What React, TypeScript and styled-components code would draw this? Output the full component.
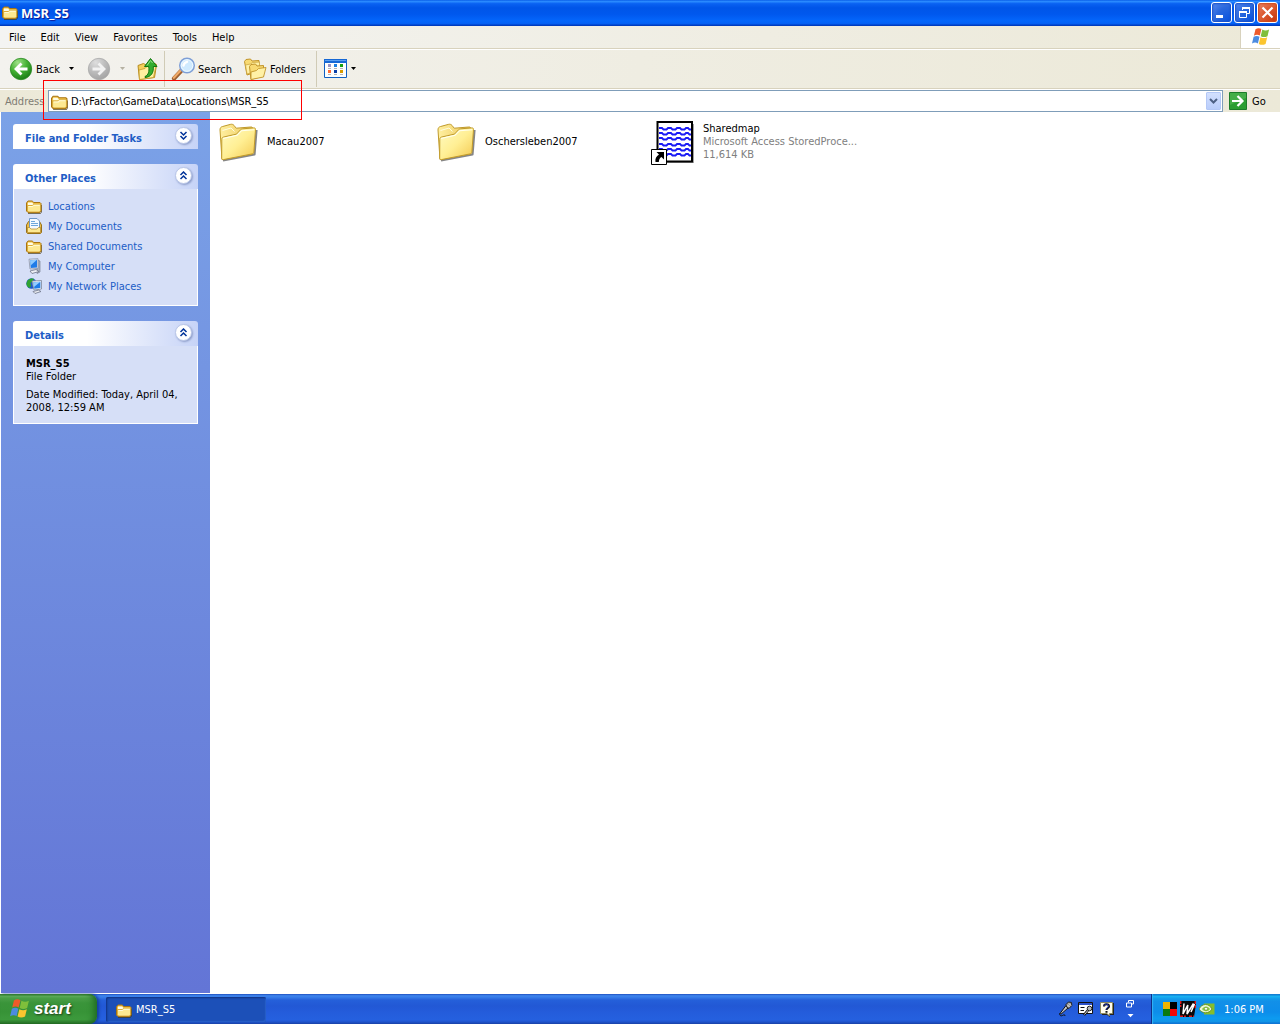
import React, { useState } from "react";
import styled, { createGlobalStyle, css } from "styled-components";

const GlobalStyle = createGlobalStyle`
  * { box-sizing: border-box; }
  body {
    margin: 0;
    background: #fff;
    color: #000;
    font: 11px/13px "DejaVu Sans Condensed", "DejaVu Sans", sans-serif;
  }
  button, input {
    font: inherit;
    color: inherit;
    border: 0;
    margin: 0;
    padding: 0;
    background: none;
  }
  svg { display: block; flex: none; }
  ul { list-style: none; margin: 0; padding: 0; }
  h1, h2, p { margin: 0; font-size: inherit; }
`;

/* ---------- icons ---------- */

const FolderIcon = ({ size = 16 }: { size?: number }) => (
  <svg width={size} height={size} viewBox="0 0 16 16" aria-hidden="true">
    <path d="M2 15.500h12.500l1-1.500V7" fill="none" stroke="#4a3c18" opacity=".7" />
    <path d="M.5 5 2 3h4.200l1.600 1.500H14l1 1V13l-1.200 1.500H2L.5 13z" fill="#f0c044" stroke="#a87412" />
    <path d="M2 4.500h4L7.500 6H14v1H2z" fill="#fffce4" />
    <path d="M1.500 7.500h4.800l1.200-1.200h7v6.200L13.500 14h-11l-1-1.200z" fill="#fde992" stroke="#cf9c25" strokeWidth=".7" />
    <path d="M2.500 8.500h4.300L8 7.300h5.700" fill="none" stroke="#fffbd8" />
  </svg>
);

const LargeFolderIcon = () => (
  <svg width="48" height="48" viewBox="0 -1 48 48" aria-hidden="true">
    <defs>
      <linearGradient id="lfFront" x1="0" y1="0" x2="1" y2="1">
        <stop offset="0" stopColor="#fffbc4" />
        <stop offset=".5" stopColor="#ffef94" />
        <stop offset="1" stopColor="#f3c84f" />
      </linearGradient>
      <linearGradient id="lfBack" x1="0" y1="0" x2="1" y2="0">
        <stop offset="0" stopColor="#fff0a0" />
        <stop offset="1" stopColor="#ecc65a" />
      </linearGradient>
    </defs>
    <path d="m9 41.500 31.500-6 2-24.500" fill="none" stroke="#222" strokeWidth="2.200" opacity=".55" strokeLinejoin="round" />
    <path d="M6 11c0-2 .8-3 2.300-3.400l8-2.200c1.700-.4 2.900 0 3.700 1l2.200 2.800 14.600-1.200c1.400-.1 2 .6 2 1.800L38 35 8 40.500z" fill="url(#lfBack)" stroke="#c09a2b" />
    <path d="M8.500 11.500 17 9l3.500 3.500" fill="none" stroke="#fffde0" />
    <path d="M36 9.800 39.500 9.500 39 32l-2.500 2z" fill="#fffdf0" stroke="#c9a544" strokeWidth=".6" />
    <path d="M7.800 20.500c0-1.500.6-2.200 1.900-2.500l12.800-2.900 4-4.300c.7-.6 1.300-.9 2.300-1l11-.9c1.200-.1 1.800.5 1.700 1.700L39.900 33c-.1 1.200-.6 1.700-1.700 1.900L9.500 40.600c-1.200.2-1.800-.3-1.800-1.500z" fill="url(#lfFront)" stroke="#c09a2b" />
    <path d="m9 19.500 14-3.200 4.500-4.600 12.500-1" fill="none" stroke="#fffff0" strokeWidth="1.100" />
  </svg>
);

const SharedMapIcon = () => (
  <svg width="48" height="48" viewBox="0 0 48 48" aria-hidden="true">
    <path d="M9 6h35v39H9z" fill="#666" opacity=".6" />
    <path d="M7.500 4h34.500v39.500H7.500z" fill="#fff" stroke="#000" strokeWidth="2" />
    {[10, 15, 20, 26, 31, 36].map((y) => (
      <path
        key={y}
        d={`M9 ${y}h3l1.500 1.500h3L18 ${y}h3l1.500 1.500h3L27 ${y}h3l1.500 1.500h3L36 ${y}h2l1.500 1.500H41`}
        fill="none"
        stroke="#1a1af5"
        strokeWidth="1.800"
      />
    ))}
    <path d="M1.500 31.500h15v15h-15z" fill="#fff" stroke="#000" />
    <path d="M6.500 34H14v7.500l-2.500-2.400c-1.800 1-2.500 2.600-2.700 5H5.500c-.6-3.400.7-6 3.500-7.700z" fill="#000" />
  </svg>
);

const DocumentsIcon = () => (
  <svg width="16" height="16" viewBox="0 0 16 16" aria-hidden="true">
    <path d="M.5 7 2.500 3.500h11l2 3.500v7.500l-1 1h-13l-1-1z" fill="#edbd45" stroke="#96701a" />
    <path d="M3.500.5h7.500l2.500 2.500v9h-10z" fill="#f4f9ff" stroke="#6f96c4" />
    <path d="M5 3.500h4M5 5.500h7M5 7.500h7" stroke="#6ea6dc" />
    <path d="M1.500 9.500h2L5 11h6l1.500-1.500h2v5h-13z" fill="#fde992" stroke="#b0842a" strokeWidth=".7" />
  </svg>
);

const ComputerIcon = () => (
  <svg width="16" height="16" viewBox="0 0 16 16" aria-hidden="true">
    <path d="m11 2 3 1v11l-3 1.500z" fill="#aab2c2" stroke="#6d7588" strokeWidth=".6" />
    <path d="M3 1.200 12 .7v9.800l-8 .5z" fill="#e3e8f2" stroke="#8a93a8" strokeWidth=".8" />
    <path d="m4 2.200 7-.5v7.800l-6.200.4z" fill="#1f7be8" />
    <path d="m4 2.200 7-.5L4.600 7.500z" fill="#8cc9ff" />
    <path d="m4 13 6-1.500 3 2L6 15.500z" fill="#eef0f5" stroke="#6d7588" strokeWidth=".8" />
  </svg>
);

const NetworkIcon = () => (
  <svg width="16" height="16" viewBox="0 0 16 16" aria-hidden="true">
    <circle cx="5.500" cy="5.500" r="5.200" fill="#1f57c8" />
    <path d="M1.500 2.500C3.500.3 6 0 8 .8L6.500 3.500 4.500 5 5 8l-1.500 2C1.500 9 .5 7.500.4 5.500z" fill="#2fa332" />
    <path d="M6 3 15.500 2.500V11L8 12z" fill="#eef1f7" stroke="#7c869c" strokeWidth=".8" />
    <path d="m7.200 4.200 7.200-.5V10l-6 .8z" fill="#1f7be8" />
    <path d="m7.200 4.200 7.200-.5L8 9z" fill="#93ccff" />
    <path d="m7 13.500 5.500-1.300 2.500 1.300-6 2z" fill="#eef0f5" stroke="#6d7588" strokeWidth=".8" />
  </svg>
);

const NavIcon = ({ forward }: { forward?: boolean }) => (
  <svg width="24" height="24" viewBox="0 0 24 24" aria-hidden="true">
    <defs>
      <radialGradient id={forward ? "navF" : "navB"} cx=".35" cy=".2" r=".85">
        <stop offset="0" stopColor={forward ? "#dedede" : "#9fe088"} />
        <stop offset=".5" stopColor={forward ? "#bdbdbd" : "#45b234"} />
        <stop offset="1" stopColor={forward ? "#a2a2a2" : "#187a14"} />
      </radialGradient>
    </defs>
    <circle cx="12" cy="12" r="10.700" fill={forward ? "url(#navF)" : "url(#navB)"} stroke={forward ? "#a9a9a9" : "#2a8a22"} strokeWidth=".8" />
    <path
      d={forward ? "M5.500 12H16M11.500 6.500 17 12l-5.500 5.500" : "M18.500 12H8M12.500 6.500 7 12l5.500 5.500"}
      fill="none"
      stroke={forward ? "#f2f2f2" : "#fff"}
      strokeWidth="2.800"
    />
  </svg>
);

const UpIcon = () => (
  <svg width="24" height="24" viewBox="0 0 24 24" aria-hidden="true">
    <path d="m3 8.500 5.500-2L11 8l9-1.500 1.500 1-2 13L4.500 22.500z" fill="#f3cf5c" stroke="#b78c20" />
    <path d="m4 13 6-1.500L12 9.500l9-.5-2.500 11.500-14 2z" fill="#fff0a0" stroke="#c79a2a" strokeWidth=".8" />
    <path d="M10 19.500c3.500-1.500 4.500-5 3.700-10H9.500L15.500 1.500 22 9.500h-3.700c.5 6.500-2.300 10.500-8.300 11z" fill="#35ad30" stroke="#12780f" />
    <path d="M12 8.500 15.500 3.500l2 2.500" fill="none" stroke="#9be58c" />
  </svg>
);

const SearchIcon = () => (
  <svg width="24" height="24" viewBox="0 0 24 24" aria-hidden="true">
    <path d="m3 21.500 7-7.500" stroke="#9c5f30" strokeWidth="4.200" strokeLinecap="round" />
    <path d="m2.800 20.800 7-7.500" stroke="#f0aa68" strokeWidth="2.200" strokeLinecap="round" />
    <circle cx="16" cy="8.500" r="7.300" fill="#b9e0fc" stroke="#7f9fd6" strokeWidth="1.400" />
    <circle cx="16" cy="8.500" r="5.800" fill="#cfeafe" stroke="#f4fbff" />
    <path d="M12.500 8.500c.3-2 1.500-3.200 3.500-3.700" fill="none" stroke="#fff" strokeWidth="2.400" strokeLinecap="round" />
  </svg>
);

const FoldersIcon = () => (
  <svg width="24" height="24" viewBox="0 0 24 24" aria-hidden="true">
    <path d="M1.500 4.500 3 2.500l4.500-.5L9 4l7-.5V14L4 18z" fill="#f8da72" stroke="#c1942a" />
    <path d="m2.500 8 5-1 2-1.500 7-.5v8L4 17z" fill="#fff1a6" stroke="#c9a03a" strokeWidth=".7" />
    <path d="M6.500 9.500 8 7.500l4.500-.5L14 9l6.500-.5V19L8 22.500z" fill="#f8da72" stroke="#c1942a" />
    <path d="m8 15 5.500-1.500 2-2 7.500-1-2.500 9.500L8 22.500z" fill="#fff1a6" stroke="#c1942a" strokeWidth=".9" />
  </svg>
);

const ViewsIcon = () => (
  <svg width="24" height="20" viewBox="-1 0 24 20" aria-hidden="true">
    <path d="M.5.500h22v18H.5z" fill="#fdfefe" stroke="#0f5fc2" />
    <path d="M0 0h23v4H0z" fill="#1668d4" />
    <path d="M1 1h21v1H1z" fill="#5ba0f0" />
    <path d="M4 5h3v3H4z" fill="#9a93c4" />
    <path d="M10 5h3v3h-3z" fill="#1b7fe0" />
    <path d="M16 5h3v3h-3z" fill="#15a012" />
    <path d="M4 11h3v3H4z" fill="#ff6a33" />
    <path d="M10 11h3v3h-3z" fill="#0b3fa8" />
    <path d="M16 11h3v3h-3z" fill="#d79a00" />
    <path d="M4 9.500h3m3 0h3m3 0h3M4 15.500h3m3 0h3m3 0h3" stroke="#b4b4b4" />
  </svg>
);

const Caret = ({ muted }: { muted?: boolean }) => (
  <svg width="7" height="4" viewBox="0 0 7 4" aria-hidden="true">
    <path d={muted ? "M1 0h5L3.500 3z" : "M1 0h5L3.500 3z"} fill={muted ? "#b5b1a2" : "#000"} />
  </svg>
);

const GoIcon = () => (
  <svg width="18" height="18" viewBox="0 0 18 18" aria-hidden="true">
    <path d="M.5.500h17v17H.5z" fill="#2b9e31" stroke="#1d7c28" />
    <path d="M1 1h16v5L1 13z" fill="#57b956" opacity=".6" />
    <path d="M3 9h10M8.500 4l5 5-5 5" fill="none" stroke="#fff" strokeWidth="2.200" />
  </svg>
);

const FlagIcon = ({ size = 20 }: { size?: number }) => (
  <svg width={size} height={size} viewBox="0 0 20 20" aria-hidden="true">
    <path d="M4.500 2.200C6.500.9 8.500.9 10.400 2L8.800 8.600C7 7.500 5 7.500 2.900 8.700z" fill="#ee5a2a" />
    <path d="M11.300 2.500c2.200 1.200 4.300 1.200 6.800 0l-1.600 6.700c-2.400 1.200-4.500 1.200-6.800 0z" fill="#7fbf3b" />
    <path d="M2.600 9.800c2.100-1.200 4-1.200 5.900-.1L6.900 16.400C5 15.300 3.100 15.300 1 16.500z" fill="#4b8be0" />
    <path d="M9.400 10.200c2.300 1.200 4.400 1.200 6.800 0l-1.600 6.700c-2.400 1.200-4.500 1.200-6.800 0z" fill="#fbc52f" />
  </svg>
);

const ChevronsIcon = ({ open }: { open: boolean }) => (
  <svg width="9" height="9" viewBox="0 0 9 9" aria-hidden="true">
    <path
      d={open ? "m1.500 4 3-3 3 3m-6 4 3-3 3 3" : "m1.500 1 3 3 3-3m-6 4 3 3 3-3"}
      fill="none"
      stroke="#003399"
      strokeWidth="1.500"
    />
  </svg>
);

const MinimizeGlyph = () => (
  <svg width="19" height="19" viewBox="0 0 19 19" aria-hidden="true">
    <path d="M4 12h7v3H4z" fill="#fff" />
  </svg>
);

const RestoreGlyph = () => (
  <svg width="19" height="19" viewBox="0 0 19 19" aria-hidden="true">
    <path d="M7.500 7V4.500h7v6H12" fill="none" stroke="#fff" />
    <path d="M7 4h8v2H7z" fill="#fff" />
    <path d="M4.500 8.500h7v6h-7z" fill="none" stroke="#fff" />
    <path d="M4 8h8v2H4z" fill="#fff" />
  </svg>
);

const CloseGlyph = () => (
  <svg width="19" height="19" viewBox="0 0 19 19" aria-hidden="true">
    <path d="m4.500 4.500 10 10m0-10-10 10" stroke="#fff" strokeWidth="2.200" />
  </svg>
);

const MicIcon = () => (
  <svg width="16" height="16" viewBox="0 0 16 16" aria-hidden="true">
    <path d="M3 12c-1.500 2 1 3.500 2.500 2.500S8 13.500 8 15" fill="none" stroke="#111" />
    <path d="m3 12.500 6-8 2.500 2-7.500 6.700z" fill="#c4c8d0" stroke="#111" />
    <path d="M9 3.500 11.500 1l3 .5.3 3L12 7.500 9.500 6z" fill="#9a9a9a" stroke="#222" />
    <path d="m10.500 4 2 2M12 2.500 14 4.500" stroke="#fff" strokeWidth=".8" />
  </svg>
);

const ToolsIcon = () => (
  <svg width="16" height="16" viewBox="0 0 16 16" aria-hidden="true">
    <path d="M.5 1.500h14v11H.5z" fill="#fff" stroke="#111" />
    <path d="M1 2h13v2H1z" fill="#2b50c8" />
    <path d="M2.500 6.500h4m-4 3h3.500" stroke="#111" />
    <path d="m6 14 5-6" stroke="#111" strokeWidth="2.600" />
    <path d="m6.500 13.500 5-6" stroke="#ddd" />
    <circle cx="11.500" cy="7.500" r="2.300" fill="#bbb" stroke="#222" />
  </svg>
);

const HelpIcon = () => (
  <svg width="16" height="16" viewBox="0 0 16 16" aria-hidden="true">
    <path d="M3 2h12v12h-4v2L8 14H3z" fill="#222" />
    <path d="M1.500 1.500h12v11h-3V15L8 12.500H1.500z" fill="#fffdee" stroke="#8d8a5c" />
    <path d="M5 5.500c0-3 5-3 5 0 0 1.500-2.500 1.500-2.500 3.500M7.500 10v1.800" fill="none" stroke="#111" strokeWidth="2" />
    <path d="M5 5c.5-2.500 4-2.500 4.500 0 0 1.500-2.300 1.500-2.300 3.500" fill="none" stroke="#1e3ad0" strokeWidth=".9" />
  </svg>
);

const LanguageRestoreIcon = () => (
  <svg width="10" height="8" viewBox="0 0 10 8" aria-hidden="true">
    <path d="M3.500 2.500v-2h5v3.500H7M1.500 3h5v4h-5z" fill="none" stroke="#fff" />
  </svg>
);

const TrayCaret = () => (
  <svg width="7" height="4" viewBox="0 0 7 4" aria-hidden="true">
    <path d="M.5 0h6l-3 3.200z" fill="#fff" />
  </svg>
);

const QuadIcon = () => (
  <svg width="14" height="14" viewBox="0 0 14 14" aria-hidden="true">
    <path d="M0 0h7v7H0z" fill="#f0b400" />
    <path d="M7 0h7v7H7z" fill="#000" />
    <path d="M0 7h7v7H0z" fill="#0a7a10" />
    <path d="M7 7h7v7H7z" fill="#f40808" />
  </svg>
);

const StripedIcon = () => (
  <svg width="16" height="16" viewBox="0 0 16 16" aria-hidden="true">
    <path d="M0 0h16v3l-2 13H0z" fill="#0a0a0a" />
    <path d="M.7 0v6M15.300 0v8M0 15.300h6M9 15.300h5" stroke="#e01818" strokeWidth="1.400" strokeDasharray="3 1" />
    <path d="M4 2.500 3 13 7.800 4 7 13l6.500-10.500M14.500 3 11 11" fill="none" stroke="#fff" strokeWidth="1.500" />
  </svg>
);

const GraphicsIcon = () => (
  <svg width="16" height="14" viewBox="0 0 16 14" aria-hidden="true">
    <path d="M5 1.500h10.500v11H5z" fill="#86bd2b" />
    <path d="M0 7c3-6 10-6 13 0-3 5-10 5-13 0z" fill="#eaf4d2" stroke="#5b8a12" strokeWidth=".8" />
    <path d="M3 7c2-3.500 6-3.500 8 0-2 3-6 3-8 0z" fill="#8cc63f" />
    <path d="M5 7c1-2 3-2 4 0-1 1.500-3 1.500-4 0z" fill="#fff" stroke="#5b8a12" strokeWidth=".6" />
  </svg>
);

/* ---------- window frame ---------- */

const Desktop = styled.div`
  display: flex;
  flex-direction: column;
  min-height: 100vh;
`;

const Window = styled.div`
  position: relative;
  display: flex;
  flex: 1;
  flex-direction: column;
`;

const TitleBar = styled.header`
  display: flex;
  align-items: center;
  height: 26px;
  padding: 0 2px 2px;
  background: linear-gradient(
    #0a5fe8 0, #2a8bff 6%, #0a62f2 14%, #0055e8 30%, #0058ee 55%, #0466fb 80%, #0562f5 90%, #0040c8 97%, #0036b0 100%
  );
`;

const WindowTitle = styled.h1`
  flex: 1;
  padding: 2px 0 0 3px;
  color: #fff;
  font: 700 13px/20px "Noto Sans", sans-serif;
  text-shadow: 1px 1px 1px #0f1089;
`;

const CaptionButtons = styled.div`
  display: flex;
  gap: 2px;
`;

const CaptionButton = styled.button<{ $close?: boolean }>`
  width: 21px;
  height: 21px;
  border: 1px solid #fff;
  border-radius: 3px;
  background: ${(p) =>
    p.$close
      ? "radial-gradient(circle at 90% 90%, #c83a10 0, #dc5a30 55%, #e98a6f 100%)"
      : "radial-gradient(circle at 90% 90%, #0a54e0 0, #2a68dd 55%, #5c8cf0 100%)"};
  box-shadow: inset 0 0 2px 1px ${(p) => (p.$close ? "#cf4a1c" : "#1a50c8")};
`;

const MenuBar = styled.nav`
  display: flex;
  justify-content: space-between;
  height: 23px;
  padding-left: 2px;
  background: linear-gradient(90deg, #f4f4f2, #efede2 60%, #ece9d8);
  border-bottom: 1px solid #d8d2bd;
`;

const MenuList = styled.ul`
  display: flex;
`;

const MenuButton = styled.button`
  height: 22px;
  padding: 0 8px 0 7px;
`;

const FlagBox = styled.div`
  display: grid;
  place-items: center;
  width: 40px;
  background: #fff;
  border-left: 1px solid #d8d2bd;
`;

const ToolBar = styled.div`
  display: flex;
  align-items: center;
  height: 40px;
  padding: 0 9px;
  background: linear-gradient(90deg, #f3f2ee, #efede2 50%, #ece9d8);
  border-top: 1px solid #fff;
  border-bottom: 1px solid #d8d2bd;
`;

const ToolButton = styled.button<{ $width?: number; $end?: boolean }>`
  display: flex;
  align-items: center;
  justify-content: ${(p) => (p.$end ? "flex-end" : "flex-start")};
  gap: 3px;
  width: ${(p) => (p.$width ? `${p.$width}px` : "auto")};
  height: 36px;
`;

const ArrowButton = styled.button`
  display: grid;
  place-items: center;
  width: 23px;
  height: 36px;
`;

const ToolDivider = styled.div<{ $before: number }>`
  width: 1px;
  height: 36px;
  margin: 0 6px 0 ${(p) => p.$before}px;
  background: #d0cbb6;
`;

const AddressBar = styled.form`
  display: flex;
  align-items: center;
  height: 23px;
  padding-left: 5px;
  background: linear-gradient(90deg, #ece9d8, #efede2 50%, #ece9d8);
  border-top: 1px solid #fff;
`;

const AddressLabel = styled.label`
  width: 43px;
  color: #7f7c73;
`;

const AddressField = styled.div`
  display: flex;
  flex: 1;
  align-items: center;
  height: 22px;
  padding: 1px 1px 1px 2px;
  background: #fff;
  border: 1px solid #7f9db9;
`;

const AddressInput = styled.input`
  flex: 1;
  height: 18px;
  padding-left: 3px;
  outline: 0;
`;

const DropButton = styled.button`
  display: grid;
  place-items: center;
  width: 15px;
  height: 18px;
  border-radius: 1px;
  background: linear-gradient(#d3e0fe, #b9cdfb);
  border: 1px solid #b4c8f6;
`;

const GoButton = styled.button`
  display: flex;
  align-items: center;
  gap: 5px;
  width: 57px;
  padding-left: 6px;
`;

/* Red marker drawn over the address field. */
const Highlight = styled.div`
  position: absolute;
  top: 80px;
  left: 43px;
  width: 259px;
  height: 40px;
  border: 1px solid #f00;
  pointer-events: none;
`;

/* ---------- task pane ---------- */

const Body = styled.div`
  display: flex;
  flex: 1;
  padding: 0 0 1px 1px;
`;

const Sidebar = styled.aside`
  display: flex;
  flex-direction: column;
  gap: 15px;
  width: 209px;
  padding: 12px;
  background: linear-gradient(#7ba2e7, #6375d6);
`;

const PanelHead = styled.button`
  display: flex;
  align-items: center;
  justify-content: space-between;
  width: 100%;
  height: 25px;
  padding: 3px 6px 0 12px;
  border-radius: 3px 3px 0 0;
  background: linear-gradient(90deg, #fff 40%, #c6d3f7);
  color: #215dc6;
  font-weight: 700;
`;

const ChevronBadge = styled.span`
  display: grid;
  place-items: center;
  width: 17px;
  height: 17px;
  margin-bottom: 5px;
  border: 1px solid #b9c6e8;
  border-radius: 50%;
  background: #fff;
  box-shadow: 1px 1px 2px #8c9cc8;
`;

const panelBody = css`
  padding: 7px 12px;
  background: #d6dff7;
  border: 1px solid #fff;
  border-top: 0;
`;

const PlaceList = styled.ul`
  ${panelBody}
  padding-bottom: 9px;
`;

const PlaceLink = styled.a`
  display: flex;
  align-items: center;
  gap: 6px;
  height: 20px;
  color: #215dc6;
  text-decoration: none;
`;

const DetailsBody = styled.div`
  ${panelBody}
  padding: 11px 12px 9px;
  p + p { margin-top: 5px; }
`;

/* ---------- files ---------- */

const FileList = styled.ul`
  display: grid;
  flex: 1;
  grid-template-columns: repeat(auto-fill, 218px);
  align-content: start;
  padding: 6px 4px;
`;

const FileTile = styled.li`
  display: flex;
  align-items: center;
  gap: 5px;
  height: 48px;
`;

const FileText = styled.div`
  width: 160px;
  padding-bottom: 2px;
  p {
    overflow: hidden;
    white-space: nowrap;
  }
  p + p { color: #808080; }
`;

/* ---------- taskbar ---------- */

const TaskBar = styled.footer`
  display: flex;
  height: 30px;
  color: #fff;
  background: linear-gradient(
    #1f4fbe 0, #3f86ee 6%, #3478e6 12%, #2560da 20%, #2258d5 40%, #245cdb 60%, #2560df 86%, #1f54cc 93%, #1941a5 100%
  );
`;

const StartButton = styled.button`
  display: flex;
  align-items: center;
  gap: 3px;
  width: 97px;
  padding-left: 9px;
  border-radius: 0 8px 8px 0;
  background: linear-gradient(
    #2f7a30 0, #5fae5c 8%, #4a9f48 14%, #3a943a 30%, #379337 60%, #3d9a3d 85%, #2f7f2f 94%, #246824 100%
  );
  box-shadow: inset -5px 0 6px -2px #1f6a22, 2px 0 3px #143f9c;
  font: italic 700 17px/22px "Liberation Sans", sans-serif;
  text-shadow: 1px 1px 2px #1b3d14;
`;

const TaskButton = styled.button`
  display: flex;
  align-items: center;
  gap: 4px;
  width: 160px;
  height: 25px;
  margin: 3px 0 0 9px;
  padding-left: 10px;
  border-radius: 2px;
  background: #1c50b8;
  box-shadow: inset 1px 1px 2px #0f3080, inset -1px -1px 1px #2a62cc;
`;

const LanguageBar = styled.div`
  display: flex;
  align-items: center;
  gap: 5px;
  margin-left: auto;
  padding-right: 16px;
`;

const LanguageOptions = styled.div`
  display: flex;
  flex-direction: column;
  align-items: center;
  gap: 6px;
  margin-left: 5px;
`;

const Tray = styled.div`
  display: flex;
  align-items: center;
  gap: 3px;
  width: 129px;
  padding-left: 11px;
  border-left: 1px solid #0f2f88;
  box-shadow: inset 1px 0 1px #35b4f5;
  background: linear-gradient(
    #0f6cc8 0, #19b2f2 8%, #139beb 16%, #1290e8 24%, #0d8dea 60%, #0d9bf0 82%, #1194e6 92%, #0b66cc 100%
  );
`;

const Clock = styled.time`
  padding-left: 6px;
`;

const menus = ["File", "Edit", "View", "Favorites", "Tools", "Help"];

const places = [
  { name: "Locations", icon: <FolderIcon /> },
  { name: "My Documents", icon: <DocumentsIcon /> },
  { name: "Shared Documents", icon: <FolderIcon /> },
  { name: "My Computer", icon: <ComputerIcon /> },
  { name: "My Network Places", icon: <NetworkIcon /> },
];

const files = [
  { lines: ["Macau2007"], icon: <LargeFolderIcon /> },
  { lines: ["Oschersleben2007"], icon: <LargeFolderIcon /> },
  { lines: ["Sharedmap", "Microsoft Access StoredProce...", "11,614 KB"], icon: <SharedMapIcon /> },
];

function Panel({ title, initiallyOpen, children }: { title: string; initiallyOpen: boolean; children?: React.ReactNode }) {
  const [open, setOpen] = useState(initiallyOpen);
  return (
    <section>
      <PanelHead type="button" aria-expanded={open} onClick={() => setOpen(!open)}>
        {title}
        <ChevronBadge><ChevronsIcon open={open} /></ChevronBadge>
      </PanelHead>
      {open && children}
    </section>
  );
}

export default function App() {
  const [path, setPath] = useState("D:\\rFactor\\GameData\\Locations\\MSR_S5");
  return (
    <>
      <GlobalStyle />
      <Desktop>
        <Window>
          <TitleBar>
            <FolderIcon />
            <WindowTitle>MSR_S5</WindowTitle>
            <CaptionButtons>
              <CaptionButton aria-label="Minimize"><MinimizeGlyph /></CaptionButton>
              <CaptionButton aria-label="Restore"><RestoreGlyph /></CaptionButton>
              <CaptionButton aria-label="Close" $close><CloseGlyph /></CaptionButton>
            </CaptionButtons>
          </TitleBar>

          <MenuBar>
            <MenuList>
              {menus.map((m) => <li key={m}><MenuButton>{m}</MenuButton></li>)}
            </MenuList>
            <FlagBox><FlagIcon /></FlagBox>
          </MenuBar>

          <ToolBar>
            <ToolButton $width={51}><NavIcon />Back</ToolButton>
            <ArrowButton aria-label="Back history"><Caret /></ArrowButton>
            <ToolButton aria-label="Forward" $width={28} $end><NavIcon forward /></ToolButton>
            <ArrowButton aria-label="Forward history"><Caret muted /></ArrowButton>
            <ToolButton aria-label="Up" $width={25} $end><UpIcon /></ToolButton>
            <ToolDivider $before={5} />
            <ToolButton $width={72}><SearchIcon />Search</ToolButton>
            <ToolButton $width={63}><FoldersIcon />Folders</ToolButton>
            <ToolDivider $before={10} />
            <ToolButton aria-label="Views"><ViewsIcon /><Caret /></ToolButton>
          </ToolBar>

          <AddressBar onSubmit={(e) => e.preventDefault()}>
            <AddressLabel htmlFor="address">Address</AddressLabel>
            <AddressField>
              <FolderIcon size={17} />
              <AddressInput id="address" value={path} onChange={(e) => setPath(e.target.value)} />
              <DropButton type="button" aria-label="Show addresses">
                <svg width="9" height="6" viewBox="0 0 9 6" aria-hidden="true">
                  <path d="m1 1 3.500 3.500L8 1" fill="none" stroke="#4d6185" strokeWidth="2" />
                </svg>
              </DropButton>
            </AddressField>
            <GoButton type="submit"><GoIcon />Go</GoButton>
          </AddressBar>

          <Body>
            <Sidebar>
              <Panel title="File and Folder Tasks" initiallyOpen={false} />
              <Panel title="Other Places" initiallyOpen>
                <PlaceList>
                  {places.map((p) => (
                    <li key={p.name}><PlaceLink href="#">{p.icon}{p.name}</PlaceLink></li>
                  ))}
                </PlaceList>
              </Panel>
              <Panel title="Details" initiallyOpen>
                <DetailsBody>
                  <p><b>MSR_S5</b><br />File Folder</p>
                  <p>Date Modified: Today, April 04, 2008, 12:59 AM</p>
                </DetailsBody>
              </Panel>
            </Sidebar>
            <FileList>
              {files.map((f) => (
                <FileTile key={f.lines[0]}>
                  {f.icon}
                  <FileText>{f.lines.map((l) => <p key={l}>{l}</p>)}</FileText>
                </FileTile>
              ))}
            </FileList>
          </Body>
          <Highlight />
        </Window>

        <TaskBar>
          <StartButton><FlagIcon size={22} />start</StartButton>
          <TaskButton><FolderIcon />MSR_S5</TaskButton>
          <LanguageBar>
            <MicIcon />
            <ToolsIcon />
            <HelpIcon />
            <LanguageOptions><LanguageRestoreIcon /><TrayCaret /></LanguageOptions>
          </LanguageBar>
          <Tray>
            <QuadIcon />
            <StripedIcon />
            <GraphicsIcon />
            <Clock>1:06 PM</Clock>
          </Tray>
        </TaskBar>
      </Desktop>
    </>
  );
}
